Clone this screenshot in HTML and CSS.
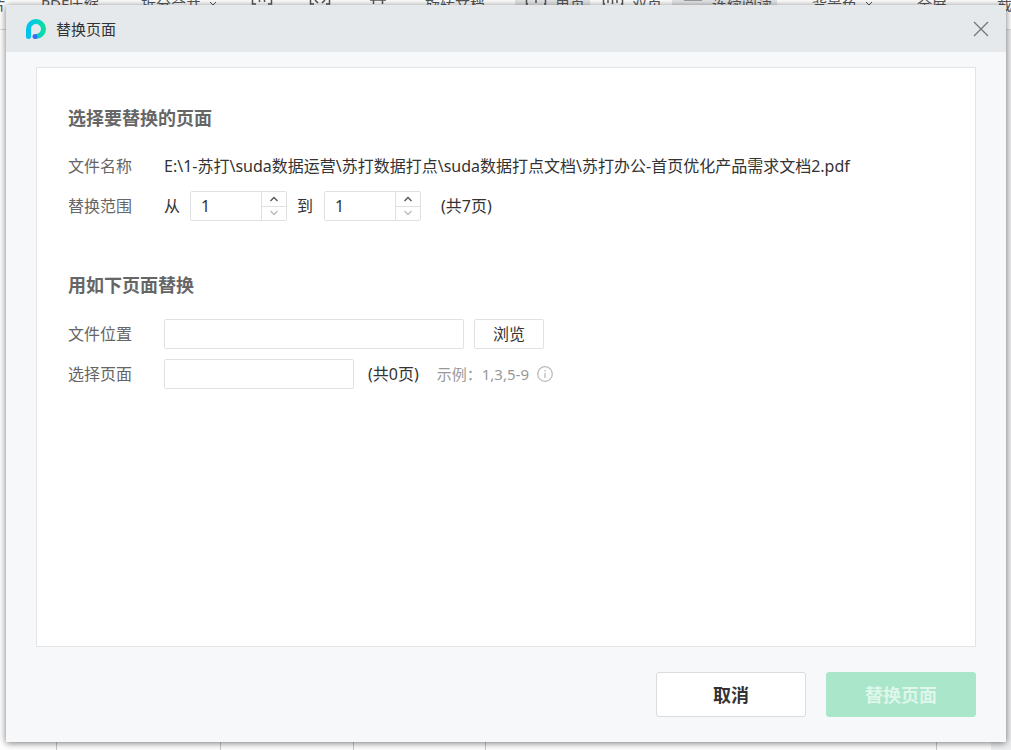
FILE: index.html
```html
<!DOCTYPE html>
<html lang="zh-CN">
<head>
<meta charset="utf-8">
<title>替换页面</title>
<link rel="stylesheet" href="styles.css">
</head>
<body>
<div class="app">
  <div class="toolbar" aria-hidden="true">
    <span class="tool tool-first">片</span>
    <span class="tool tool-compress">PDF压缩</span>
    <span class="tool tool-merge">拆分合并 <svg class="caret" viewBox="0 0 8 6"><path d="M1 1l3 3 3-3"/></svg></span>
    <span class="tool tool-icon"><svg class="glyph" viewBox="0 0 22 20"><path d="M5 2H1.500v16H5M17 2h3.500v16H17M8.500 8v8M13.500 8v8"/></svg></span>
    <span class="tool tool-icon"><svg class="glyph" viewBox="0 0 22 20"><path d="M5 2H1.500v16H5M17 2h3.500v16H17M6 14l3 3M16 14l-3 3"/></svg></span>
    <span class="tool tool-icon"><svg class="glyph" viewBox="0 0 22 20"><path d="M3 14h3.500v4M19 14h-3.500v4M6 14h10"/></svg></span>
    <span class="tool tool-rotate">旋转文档</span>
    <span class="tool tool-single"><svg class="glyph" viewBox="0 0 22 20"><path d="M3 2H1.500v16H3M19 2h1.500v16H19M11 14v3"/></svg>单页</span>
    <span class="tool tool-double"><svg class="glyph" viewBox="0 0 22 20"><path d="M3 2H1.500v16H3M19 2h1.500v16H19M6 14v3M10.500 12v6M15 14v3"/></svg>双页</span>
    <span class="tool tool-scroll"><svg class="glyph" viewBox="0 0 22 20"><path d="M2 9h18M2 13.500h18" stroke-width="2"/></svg>连续阅读</span>
    <span class="tool tool-color">背景色 <svg class="caret" viewBox="0 0 8 6"><path d="M1 1l3 3 3-3"/></svg></span>
    <span class="tool tool-full">全屏</span>
    <span class="tool">截</span>
  </div>
  <div class="sheet" aria-hidden="true">
    <span class="cell cell-a"></span><span class="cell cell-b"></span><span class="cell cell-c"></span><span class="cell cell-d"></span><span class="cell cell-e"></span><span class="cell cell-f"></span><span class="gutter"></span>
  </div>
</div>

<main class="dialog" role="dialog" aria-labelledby="dialog-title">
  <header class="titlebar">
    <svg class="logo" viewBox="0 0 20 20" aria-hidden="true">
      <defs>
        <linearGradient id="ring" x1="0" y1="0" x2="1" y2="0">
          <stop offset="0" stop-color="#00c3ec"/>
          <stop offset="0.5" stop-color="#02cfd6"/>
          <stop offset="1" stop-color="#08dda0"/>
        </linearGradient>
      </defs>
      <path d="M2.500 17.500V10a7.500 7.500 0 1 1 7.500 7.500" fill="none" stroke="url(#ring)" stroke-width="5" stroke-linecap="round"/>
      <circle cx="9" cy="17.500" r="2.500" fill="#3b6cf6"/>
    </svg>
    <h1 class="title" id="dialog-title">替换页面</h1>
    <button class="close" type="button" aria-label="关闭"><svg viewBox="0 0 16 16"><path d="M1 1l14 14M15 1L1 15"/></svg></button>
  </header>

  <form class="body">
    <div class="panel">
      <section class="group">
        <h2 class="heading">选择要替换的页面</h2>
        <div class="row">
          <span class="label">文件名称</span>
          <span class="path">E:\1-苏打\suda数据运营\苏打数据打点\suda数据打点文档\苏打办公-首页优化产品需求文档2.pdf</span>
        </div>
        <div class="row">
          <span class="label">替换范围</span>
          <label class="word" for="from">从</label>
          <span class="spinner">
            <input class="spin-input" id="from" type="text" inputmode="numeric" value="1">
            <span class="steps">
              <button class="step" type="button" aria-label="增加"><svg viewBox="0 0 10 6"><path d="M1.500 5L5 1.500 8.500 5"/></svg></button>
              <button class="step step-off" type="button" aria-label="减少"><svg viewBox="0 0 10 6"><path d="M1.500 1L5 4.500 8.500 1"/></svg></button>
            </span>
          </span>
          <label class="word word-mid" for="to">到</label>
          <span class="spinner">
            <input class="spin-input" id="to" type="text" inputmode="numeric" value="1">
            <span class="steps">
              <button class="step" type="button" aria-label="增加"><svg viewBox="0 0 10 6"><path d="M1.500 5L5 1.500 8.500 5"/></svg></button>
              <button class="step step-off" type="button" aria-label="减少"><svg viewBox="0 0 10 6"><path d="M1.500 1L5 4.500 8.500 1"/></svg></button>
            </span>
          </span>
          <span class="total total-range">(共7页)</span>
        </div>
      </section>

      <section class="group">
        <h2 class="heading">用如下页面替换</h2>
        <div class="row">
          <label class="label" for="file">文件位置</label>
          <input class="field field-file" id="file" type="text">
          <button class="browse" type="button">浏览</button>
        </div>
        <div class="row">
          <label class="label" for="pages">选择页面</label>
          <input class="field field-pages" id="pages" type="text">
          <span class="total total-source">(共0页)</span>
          <span class="hint">示例：1,3,5-9</span>
          <svg class="info" viewBox="0 0 16 16" aria-hidden="true"><circle cx="8" cy="8" r="7.300"/><path d="M8 7v5M8 4v1.500"/></svg>
        </div>
      </section>
    </div>

    <footer class="actions">
      <button class="action cancel" type="button">取消</button>
      <button class="action submit" type="submit" disabled>替换页面</button>
    </footer>
  </form>
</main>
</body>
</html>
```

FILE: styles.css
```css
* {
  box-sizing: border-box;
}

body {
  margin: 0;
  height: 100vh;
  overflow: hidden;
  position: relative;
  background: #fff;
  color: #333;
  font: 16px/24px "Noto Sans", "Noto Sans CJK SC", sans-serif;
}

button,
input {
  font: inherit;
  color: inherit;
}

button {
  padding: 0;
}

svg {
  display: block;
  fill: none;
  stroke: currentColor;
}

/* Document window behind the dialog */
.app {
  height: 100vh;
  display: flex;
  flex-direction: column;
}

.toolbar {
  height: 30px;
  display: flex;
  flex: none;
  border-bottom: 1px solid #dcdcdc;
  font-size: 15px;
  line-height: 8px;
  white-space: nowrap;
  color: #555;
  overflow: hidden;
}

.tool {
  height: 8px;
  flex: none;
  display: flex;
  align-items: center;
  gap: 8px;
}

.tool-first { width: 41px; text-indent: -9px; }
.tool-compress { width: 100px; }
.tool-merge { width: 110px; }
.tool-icon { width: 58px; }
.tool-rotate { width: 90px; }
.tool-single { width: 75px; padding-left: 10px; background: #e5e6e8; }
.tool-double { width: 82px; padding-left: 12px; }
.tool-scroll { width: 105px; padding-left: 10px; background: #e5e6e8; }
.tool-color { width: 105px; padding-left: 35px; }
.tool-full { width: 115px; padding-left: 35px; }

.glyph {
  width: 22px;
  height: 20px;
  margin-top: -16px;
  stroke-width: 1.5;
}

.caret {
  width: 8px;
  height: 6px;
}

.sheet {
  flex: 1;
  display: flex;
}

.cell {
  border-right: 1px solid #c8c8c8;
}

.cell-a { width: 57px; }
.cell-b { width: 164px; }
.cell-c { width: 133px; }
.cell-d { width: 132px; }
.cell-e { flex: 1; }
.cell-f { width: 54px; border: 0; }

.gutter {
  width: 20px;
  background: #eeeff1;
}

/* Dialog */
.dialog {
  position: absolute;
  inset: 5px 5px 8px 6px;
  display: flex;
  flex-direction: column;
  background: #f7f8fa;
  box-shadow: 0 1px 7px rgba(0, 0, 0, 0.55);
}

.titlebar {
  height: 47px;
  flex: none;
  display: flex;
  align-items: center;
  padding: 0 17px 0 20px;
  background: #e5e9ec;
}

.logo {
  width: 20px;
  height: 20px;
  stroke: none;
}

.title {
  flex: 1;
  margin: 0 0 0 10px;
  font-size: 15px;
  font-weight: 400;
}

.close {
  width: 16px;
  height: 16px;
  border: 0;
  background: none;
  color: #777;
  stroke-width: 1.4;
}

.body {
  flex: 1;
  display: flex;
  flex-direction: column;
  padding: 15px 30px 25px;
}

.panel {
  flex: 1;
  display: flex;
  flex-direction: column;
  gap: 51px;
  padding: 38px 31px;
  background: #fff;
  border: 1px solid #e2e4e7;
}

.heading {
  margin: 0 0 20px;
  font-size: 18px;
  line-height: 24px;
  font-weight: 700;
  color: #666;
}

.group + .group .heading {
  margin-bottom: 21px;
}

.row {
  height: 32px;
  display: flex;
  align-items: center;
  white-space: nowrap;
}

.row + .row {
  margin-top: 8px;
}

.label {
  width: 96px;
  flex: none;
  color: #666;
}

.word {
  width: 26px;
}

.word-mid {
  width: 37px;
  padding-left: 10px;
}

.spinner {
  width: 97px;
  height: 30px;
  display: flex;
  border: 1px solid #dfe1e4;
  border-radius: 2px;
}

.spin-input {
  width: 70px;
  padding: 0 10px;
  border: 0;
  outline: 0;
  background: none;
}

.steps {
  flex: 1;
  display: flex;
  flex-direction: column;
  border-left: 1px solid #dfe1e4;
}

.step {
  flex: 1;
  display: flex;
  align-items: center;
  justify-content: center;
  border: 0;
  background: none;
  color: #555;
}

.step svg {
  width: 10px;
  height: 6px;
  stroke-width: 1.4;
}

.step-off {
  border-top: 1px solid #dfe1e4;
  color: #bbb;
}

.total-range {
  margin-left: 20px;
}

.total-source {
  margin-left: 14px;
}

.field {
  height: 30px;
  padding: 0 8px;
  border: 1px solid #dfe1e4;
  border-radius: 2px;
  background: #fff;
}

.field-file {
  width: 300px;
}

.field-pages {
  width: 190px;
}

.browse {
  width: 70px;
  height: 30px;
  margin-left: 10px;
  border: 1px solid #dfe1e4;
  border-radius: 2px;
  background: #fff;
}

.hint {
  margin-left: 18px;
  font-size: 15px;
  color: #999;
}

.info {
  width: 16px;
  height: 16px;
  margin-left: 8px;
  color: #bbb;
  stroke-width: 1.3;
}

.actions {
  display: flex;
  justify-content: flex-end;
  gap: 20px;
  padding-top: 25px;
}

.action {
  width: 150px;
  height: 45px;
  border: 1px solid #d9dbde;
  border-radius: 3px;
  background: #fff;
  font-size: 18px;
  font-weight: 700;
}

.submit {
  border-color: #a9e6ca;
  background: #a9e6ca;
  color: #dff6eb;
}
```
